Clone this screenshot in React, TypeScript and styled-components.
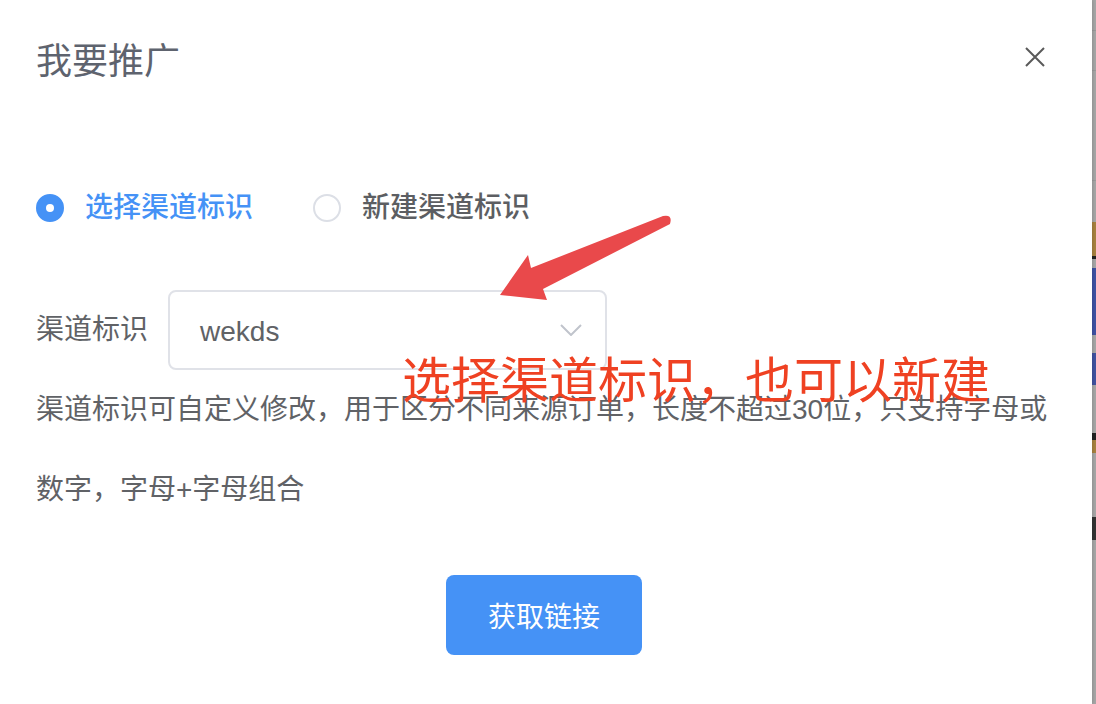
import React from 'react'
import styled, { createGlobalStyle } from 'styled-components'

const GlobalStyle = createGlobalStyle`
  html, body {
    margin: 0;
    padding: 0;
    background: #a6a6a6;
  }
  body {
    font-family: 'Liberation Sans', 'Noto Sans CJK SC', sans-serif;
  }
  * {
    box-sizing: border-box;
  }
`

const Page = styled.div`
  display: flex;
  height: 704px;
  overflow: hidden;
`

const Dialog = styled.div`
  position: relative;
  flex-shrink: 0;
  width: 1092px;
  height: 704px;
  background: #fff;
  padding: 0 36px;
  box-shadow: 1px 0 3px rgba(0, 0, 0, 0.15);
`

const Header = styled.div`
  display: flex;
  justify-content: space-between;
  padding-top: 38px;
  padding-right: 11px;
`

const Title = styled.h2`
  margin: 0;
  font-size: 36px;
  line-height: 48px;
  font-weight: 400;
  color: #5e636e;
`

const CloseButton = styled.button`
  margin-top: 9px;
  width: 20px;
  height: 20px;
  padding: 0;
  border: none;
  background: none;
  cursor: pointer;
  display: flex;
`

const RadioGroup = styled.div`
  display: flex;
  align-items: center;
  height: 40px;
  margin-top: 102px;
`

const RadioItem = styled.label`
  display: flex;
  align-items: center;
  margin-right: 60px;
  cursor: pointer;
`

const RadioCircle = styled.span<{ $checked?: boolean }>`
  width: 28px;
  height: 28px;
  border-radius: 50%;
  border: 2px solid ${p => (p.$checked ? '#4592f6' : '#dcdfe6')};
  background: ${p => (p.$checked ? '#4592f6' : '#fff')};
  display: flex;
  align-items: center;
  justify-content: center;
  margin-right: 21px;

  &::after {
    content: '';
    width: 8px;
    height: 8px;
    border-radius: 50%;
    background: #fff;
    display: ${p => (p.$checked ? 'block' : 'none')};
  }
`

const RadioLabel = styled.span<{ $checked?: boolean }>`
  font-size: 28px;
  line-height: 40px;
  font-weight: 500;
  color: ${p => (p.$checked ? '#4592f6' : '#5c5e62')};
`

const FormRow = styled.div`
  display: flex;
  align-items: center;
  margin-top: 62px;
  height: 80px;
`

const FieldLabel = styled.span`
  font-size: 28px;
  line-height: 80px;
  color: #606266;
  padding-right: 20px;
`

const Select = styled.div`
  width: 439px;
  height: 80px;
  border: 2px solid #e0e2e8;
  border-radius: 8px;
  display: flex;
  align-items: center;
  justify-content: space-between;
  padding: 0 23px 0 30px;
`

const SelectValue = styled.span`
  font-size: 28px;
  color: #606266;
  margin-top: 3px;
`

const Description = styled.p`
  margin: 0;
  font-size: 28px;
  line-height: 80px;
  color: #606266;
`

const Footer = styled.div`
  display: flex;
  justify-content: center;
  margin-top: 45px;
  padding-right: 4px;
`

const PrimaryButton = styled.button`
  width: 196px;
  height: 80px;
  border: none;
  border-radius: 8px;
  background: #4592f6;
  color: #fff;
  font-family: 'Liberation Sans', 'Noto Sans CJK SC', sans-serif;
  font-size: 28px;
  cursor: pointer;
`

const AnnotationText = styled.div`
  position: absolute;
  left: 402px;
  top: 357px;
  font-size: 49px;
  line-height: 48px;
  color: #ef4122;
  white-space: nowrap;
`

const AnnotationArrow = styled.svg`
  position: absolute;
  left: 495px;
  top: 210px;
  width: 180px;
  height: 95px;
`

const Backdrop = styled.div`
  flex: 1;
  display: flex;
  flex-direction: column;
`

const Band = styled.div<{ $h: number; $c: string }>`
  height: ${p => p.$h}px;
  flex-shrink: 0;
  background: ${p => p.$c};
`

const grey = '#a6a6a6'
const bands: { h: number; c: string }[] = [
  { h: 30, c: grey },
  { h: 1, c: '#999' },
  { h: 39, c: grey },
  { h: 1, c: '#9a9a9a' },
  { h: 109, c: grey },
  { h: 1, c: '#9a9a9a' },
  { h: 41, c: grey },
  { h: 34, c: '#a8823f' },
  { h: 3, c: '#222' },
  { h: 9, c: grey },
  { h: 67, c: '#3f51a3' },
  { h: 18, c: grey },
  { h: 32, c: '#4052a0' },
  { h: 48, c: grey },
  { h: 7, c: '#222' },
  { h: 13, c: '#a8823f' },
  { h: 64, c: grey },
  { h: 23, c: '#333' },
  { h: 164, c: grey },
]

const App: React.FC = () => {
  return (
    <>
      <GlobalStyle />
      <Page>
        <Dialog>
          <Header>
            <Title>我要推广</Title>
            <CloseButton aria-label="关闭">
              <svg width="20" height="20" viewBox="0 0 20 20">
                <path
                  d="M1 1 L19 19 M19 1 L1 19"
                  stroke="#5a5a5a"
                  strokeWidth="2"
                  fill="none"
                />
              </svg>
            </CloseButton>
          </Header>

          <RadioGroup>
            <RadioItem>
              <RadioCircle $checked />
              <RadioLabel $checked>选择渠道标识</RadioLabel>
            </RadioItem>
            <RadioItem>
              <RadioCircle />
              <RadioLabel>新建渠道标识</RadioLabel>
            </RadioItem>
          </RadioGroup>

          <FormRow>
            <FieldLabel>渠道标识</FieldLabel>
            <Select>
              <SelectValue>wekds</SelectValue>
              <svg width="22" height="12" viewBox="0 0 22 12">
                <path
                  d="M1 1 L11 11 L21 1"
                  stroke="#c0c4cc"
                  strokeWidth="2"
                  fill="none"
                />
              </svg>
            </Select>
          </FormRow>

          <Description>
            渠道标识可自定义修改，用于区分不同来源订单，长度不超过30位，只支持字母或数字，字母+字母组合
          </Description>

          <Footer>
            <PrimaryButton>获取链接</PrimaryButton>
          </Footer>

          <AnnotationArrow viewBox="495 210 180 95">
            <path
              d="M500 295 L528 255 L531 268 L663 216 Q673 214 670 224 L543 289 L547 300 Z"
              fill="#e9494b"
            />
          </AnnotationArrow>
          <AnnotationText>选择渠道标识，也可以新建</AnnotationText>
        </Dialog>
        <Backdrop>
          {bands.map((b, i) => (
            <Band key={i} $h={b.h} $c={b.c} />
          ))}
        </Backdrop>
      </Page>
    </>
  )
}

export default App
